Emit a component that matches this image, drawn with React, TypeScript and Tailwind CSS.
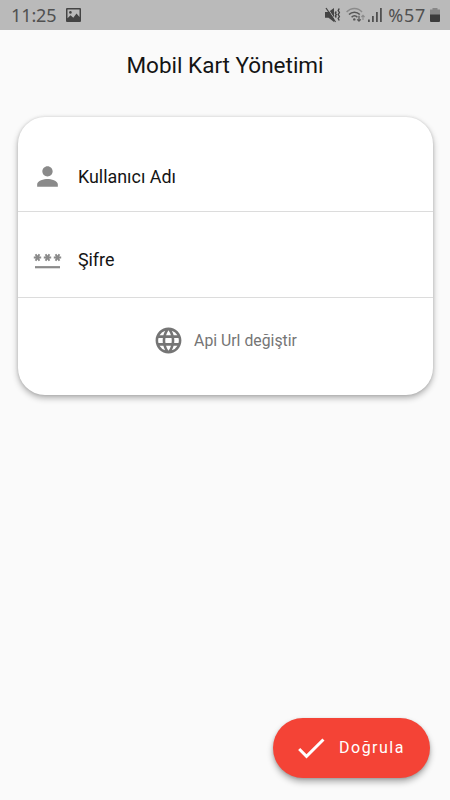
import type { ReactNode } from "react"
import { MdCheck, MdLanguage, MdPerson } from "react-icons/md"

const StatusBar = () => {
  return (
    <div className="flex h-[30px] items-center justify-between bg-[#bababa] pl-[11px] pr-[10px] font-['Noto_Sans',sans-serif] text-[18px] leading-none text-[#505050]">
      <div className="flex items-center gap-[9px]">
        <span className="tracking-[-0.1px]">11:25</span>
        <svg width="15" height="14" viewBox="0 0 15 14">
          <path
            fill="#444"
            fillRule="evenodd"
            d="M1 0h13a1 1 0 0 1 1 1v12a1 1 0 0 1-1 1H1a1 1 0 0 1-1-1V1a1 1 0 0 1 1-1zm.5 1.5v8.7l3-3 2.8 2.6 3.2-4.3 3 3.5V1.5z"
          />
          <circle cx="4.4" cy="4.4" r="1.3" fill="#444" />
        </svg>
      </div>
      <div className="flex items-center">
        <svg width="16" height="16" viewBox="0 0 16 16" fill="none" stroke="#444">
          <path fill="#444" stroke="none" d="M0 5h3.5L9 1v14l-5.5-4.3H0z" />
          <path stroke="#bababa" strokeWidth="1" d="M2.2.8 11 14" />
          <path strokeWidth="1.3" d="M1 1l9.5 14" />
          <path strokeWidth="1.4" d="M11.3 4.5l-1 1.5 1 1.5-1 1.5 1 1.5M14.2 1.5l-1 2 1.2 2-1.2 2 1.2 2-1.2 2 1 2" />
        </svg>
        <svg className="ml-[5px]" width="20" height="16" viewBox="0 0 20 16" fill="none" stroke="#555" strokeWidth="1.5">
          <path stroke="#8b8b8b" d="M.6 5C5 .2 12 .2 16 5" />
          <path d="M3 7.6c3-3.3 7.8-3.3 10.8 0" />
          <path d="M5.6 10.2c1.8-1.9 4-1.9 5.8 0" />
          <circle cx="8.3" cy="12.4" r="1.2" fill="#555" stroke="none" />
          <path strokeWidth="1.2" d="M13 8.8v5.4M11.2 12.4l1.8 1.8 1.8-1.8" />
          <path stroke="#8b8b8b" strokeWidth="1.1" d="M17 13V8.4M15.4 10 17 8.4l1.6 1.6" />
        </svg>
        <svg className="ml-[2px]" width="14" height="14" viewBox="0 0 14 14" fill="#505050">
          <path d="M0 11.5h1.8V14H0zM4 8h1.8v6H4zM8 4h1.8v10H8zM12 0h1.8v14H12z" />
        </svg>
        <span className="ml-[6px] tracking-[0.7px]">%57</span>
        <svg className="ml-[4px]" width="10" height="14" viewBox="0 0 10 14">
          <path fill="#888" d="M2.5 0h5v1.5H10V7H0V1.5h2.5z" />
          <path fill="#3c3c3c" d="M0 6.5h10V13a1 1 0 0 1-1 1H1a1 1 0 0 1-1-1z" />
        </svg>
      </div>
    </div>
  )
}

// three asterisks over an underline
const PasswordIcon = () => {
  return (
    <svg width="31" height="31" viewBox="0 0 31 31" fill="none" stroke="currentColor" strokeWidth="1.9">
      {[5.5, 15.5, 25.5].map((x) => (
        <path key={x} transform={`translate(${x} 12.5)`} d="M-3.7 0h7.4M-1.9-3.3l3.8 6.6M1.9-3.3l-3.8 6.6" />
      ))}
      <path strokeWidth="2.2" d="M3 22.2h25" />
    </svg>
  )
}

const Field = ({ icon, label, className }: { icon: ReactNode; label: string; className: string }) => {
  return (
    <div className={`flex items-center border-b border-[#dcdcdc] pl-[14.4px] text-[#8a8a8a] ${className}`}>
      {icon}
      <span className="ml-[15px] text-[17.9px] leading-none text-[#141414]">{label}</span>
    </div>
  )
}

const App = () => {
  return (
    <div className="flex h-[800px] w-[450px] flex-col bg-[#fafafa] font-[Roboto,sans-serif]">
      <StatusBar />
      <h1 className="mt-[22px] text-center text-[22.5px] leading-[26px] text-[#141414]">Mobil Kart Yönetimi</h1>

      <div className="mx-[17.5px] mt-[39px] h-[277.5px] rounded-[27px] bg-white shadow-[0_3px_6px_rgba(0,0,0,0.3),0_0_3px_rgba(0,0,0,0.12)]">
        <Field icon={<MdPerson size={31} />} label="Kullanıcı Adı" className="h-[95px] pt-[25px]" />
        <Field icon={<PasswordIcon />} label="Şifre" className="h-[86px] pt-[11px]" />
        <button className="flex h-[85px] w-full items-center justify-center gap-[10px] text-[15.8px] text-[#757575]">
          <MdLanguage size={31} />
          Api Url değiştir
        </button>
      </div>

      <button className="mb-[22.5px] mr-[20px] mt-auto flex h-[60px] w-[157px] items-center self-end rounded-full bg-[#f44336] pl-[20px] text-[16px] tracking-[1.5px] text-white shadow-[0_4px_6px_rgba(0,0,0,0.3),0_1px_3px_rgba(0,0,0,0.15)]">
        <MdCheck size={36} />
        <span className="ml-[10px]">Doğrula</span>
      </button>
    </div>
  )
}

export default App
